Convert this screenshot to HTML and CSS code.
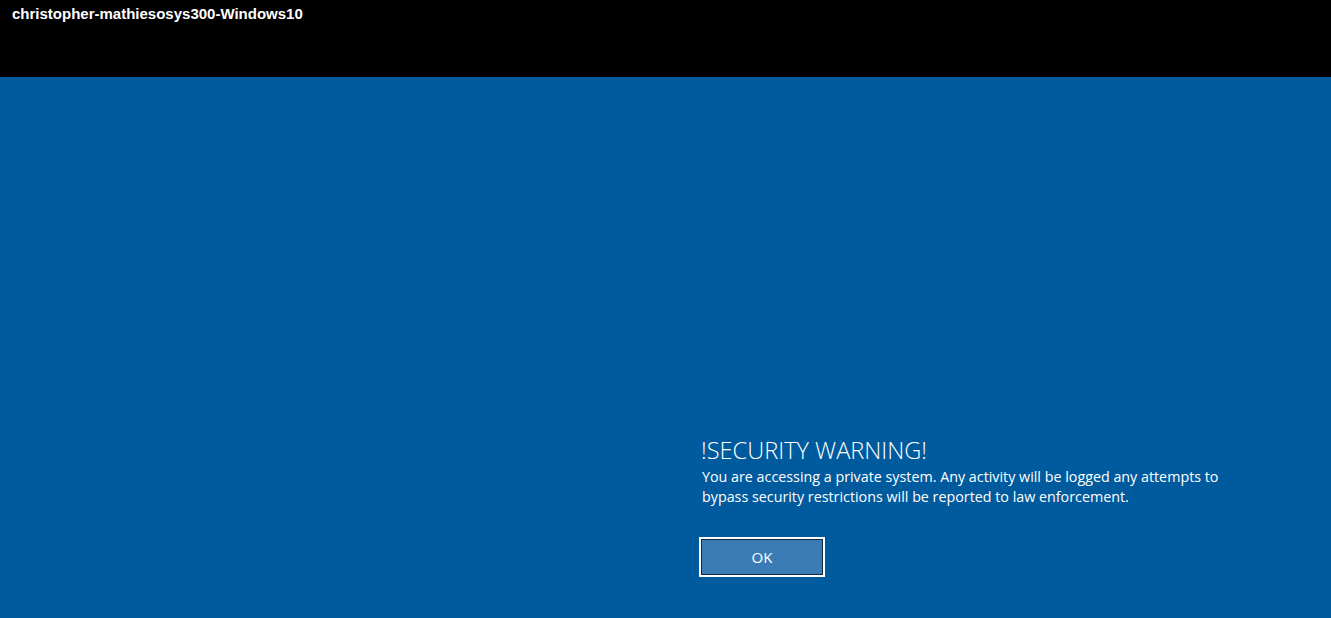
FILE: index.html
```html
<!DOCTYPE html>
<html>
<head>
<meta charset="utf-8">
<link rel="stylesheet" href="styles.css">
</head>
<body>
<header class="topbar">
  <div class="hostname">christopher-mathiesosys300-Windows10</div>
</header>
<main class="screen">
  <section class="notice">
    <h1 class="notice-title">!SECURITY WARNING!</h1>
    <p class="notice-text">You are accessing a private system. Any activity will be logged any attempts to<br>bypass security restrictions will be reported to law enforcement.</p>
    <button class="ok-btn">OK</button>
  </section>
</main>
</body>
</html>
```
FILE: styles.css
```css
html, body {
  margin: 0;
  padding: 0;
  height: 100%;
}
body {
  display: flex;
  flex-direction: column;
  background: #005a9e;
  overflow: hidden;
}
.topbar {
  height: 77px;
  background: #000;
  flex: 0 0 auto;
  box-sizing: border-box;
  padding: 4px 0 0 12px;
}
.hostname {
  color: #fff;
  font-family: "Liberation Sans", Arial, sans-serif;
  font-weight: bold;
  font-size: 15px;
  line-height: 19px;
}
.screen {
  flex: 1 1 auto;
  background: #005a9e;
  padding: 358px 0 0 699px;
}
.notice {
  display: flex;
  flex-direction: column;
  align-items: flex-start;
}
.notice-title {
  margin: 0 0 0 2px;
  font-family: "Open Sans", sans-serif;
  font-weight: 300;
  font-size: 23.6px;
  line-height: 31px;
  color: #fff;
}
.notice-text {
  margin: 1px 0 0 3px;
  font-family: "Open Sans", sans-serif;
  font-size: 14.3px;
  line-height: 20px;
  color: #fff;
}
.ok-btn {
  margin-top: 30px;
  width: 126px;
  height: 40px;
  box-sizing: border-box;
  border: 2px solid #fff;
  outline: 1px solid #0b2a45;
  outline-offset: -3px;
  background: #3a7bb5;
  color: #fff;
  font-family: "Open Sans", sans-serif;
  font-size: 15px;
  padding: 0;
}
```
